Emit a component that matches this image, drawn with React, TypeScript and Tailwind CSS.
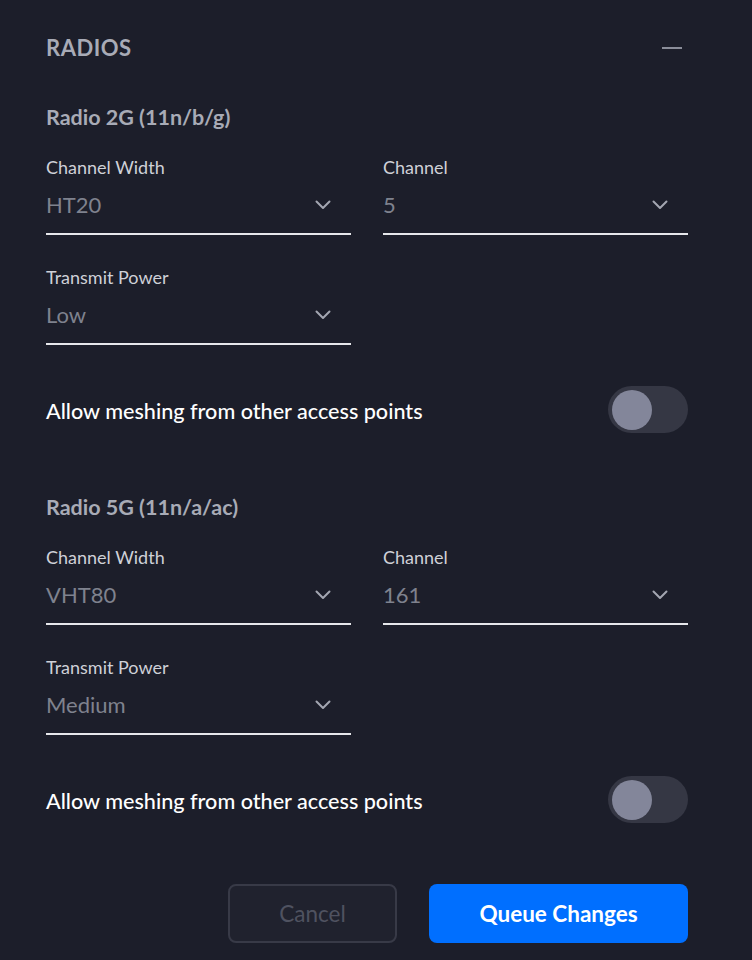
import React, { useState } from 'react';

const font = { fontFamily: 'Lato, "Noto Sans", sans-serif' };

const Chevron: React.FC = () => (
  <svg width="16" height="10" viewBox="0 0 16 10" fill="none" className="text-[#a3a6b1]">
    <path d="M1.5 1.5L8 8L14.5 1.5" stroke="currentColor" strokeWidth="2" strokeLinecap="round" strokeLinejoin="round" />
  </svg>
);

const SelectField: React.FC<{ label: string; value: string }> = ({ label, value }) => (
  <div className="flex flex-col">
    <span className="text-[18px] leading-[20px] text-[#cfd1d8]">{label}</span>
    <div className="mt-4 flex items-center justify-between pb-4 pr-[20px] border-b-2 border-[#e6e7eb]">
      <span className="text-[22px] leading-[24px] text-[#7f828e]">{value}</span>
      <Chevron />
    </div>
  </div>
);

const Toggle: React.FC<{ on: boolean; onChange: () => void }> = ({ on, onChange }) => (
  <button
    onClick={onChange}
    className={`w-[80px] h-[47px] rounded-full p-[4px] flex items-center ${on ? 'bg-[#006fff] justify-end' : 'bg-[#353744] justify-start'}`}
  >
    <span className="block w-[40px] h-[40px] rounded-full bg-[#83869a]" />
  </button>
);

const RadioBlock: React.FC<{
  title: string;
  width: string;
  channel: string;
  power: string;
}> = ({ title, width, channel, power }) => {
  const [mesh, setMesh] = useState(false);
  return (
    <div className="flex flex-col">
      <h3 className="text-[21.5px] leading-[24px] font-bold text-[#a8abb6]">{title}</h3>
      <div className="mt-[28px] grid grid-cols-2 gap-x-8 gap-y-8">
        <SelectField label="Channel Width" value={width} />
        <SelectField label="Channel" value={channel} />
        <SelectField label="Transmit Power" value={power} />
      </div>
      <div className="mt-[41px] flex items-center justify-between">
        <span className="text-[21.6px] leading-[24px] font-medium text-white pt-[3px]">
          Allow meshing from other access points
        </span>
        <Toggle on={mesh} onChange={() => setMesh(!mesh)} />
      </div>
    </div>
  );
};

const App: React.FC = () => {
  return (
    <div className="min-h-screen w-full bg-[#1c1e2a]" style={font}>
      <div className="pl-[46px] pr-[64px] pt-[36px] pb-[17px] flex flex-col">
        <div className="flex items-center justify-between">
          <h2 className="text-[22px] leading-[24px] font-bold tracking-[0.5px] text-[#a8abb6]">RADIOS</h2>
          <span className="block w-[20px] h-[2px] bg-[#8a8d99] mr-[6px]" />
        </div>

        <div className="mt-[45px]">
          <RadioBlock title="Radio 2G (11n/b/g)" width="HT20" channel="5" power="Low" />
        </div>

        <div className="mt-[62px]">
          <RadioBlock title="Radio 5G (11n/a/ac)" width="VHT80" channel="161" power="Medium" />
        </div>

        <div className="mt-[61px] flex justify-end gap-8">
          <button className="w-[169px] h-[59px] rounded-[8px] border-2 border-[#383a47] bg-[#20222e] text-[22.5px] text-[#4f5260]">
            Cancel
          </button>
          <button className="w-[259px] h-[59px] rounded-[8px] bg-[#006fff] text-[22.5px] font-bold text-white">
            Queue Changes
          </button>
        </div>
      </div>
    </div>
  );
};

export default App;
